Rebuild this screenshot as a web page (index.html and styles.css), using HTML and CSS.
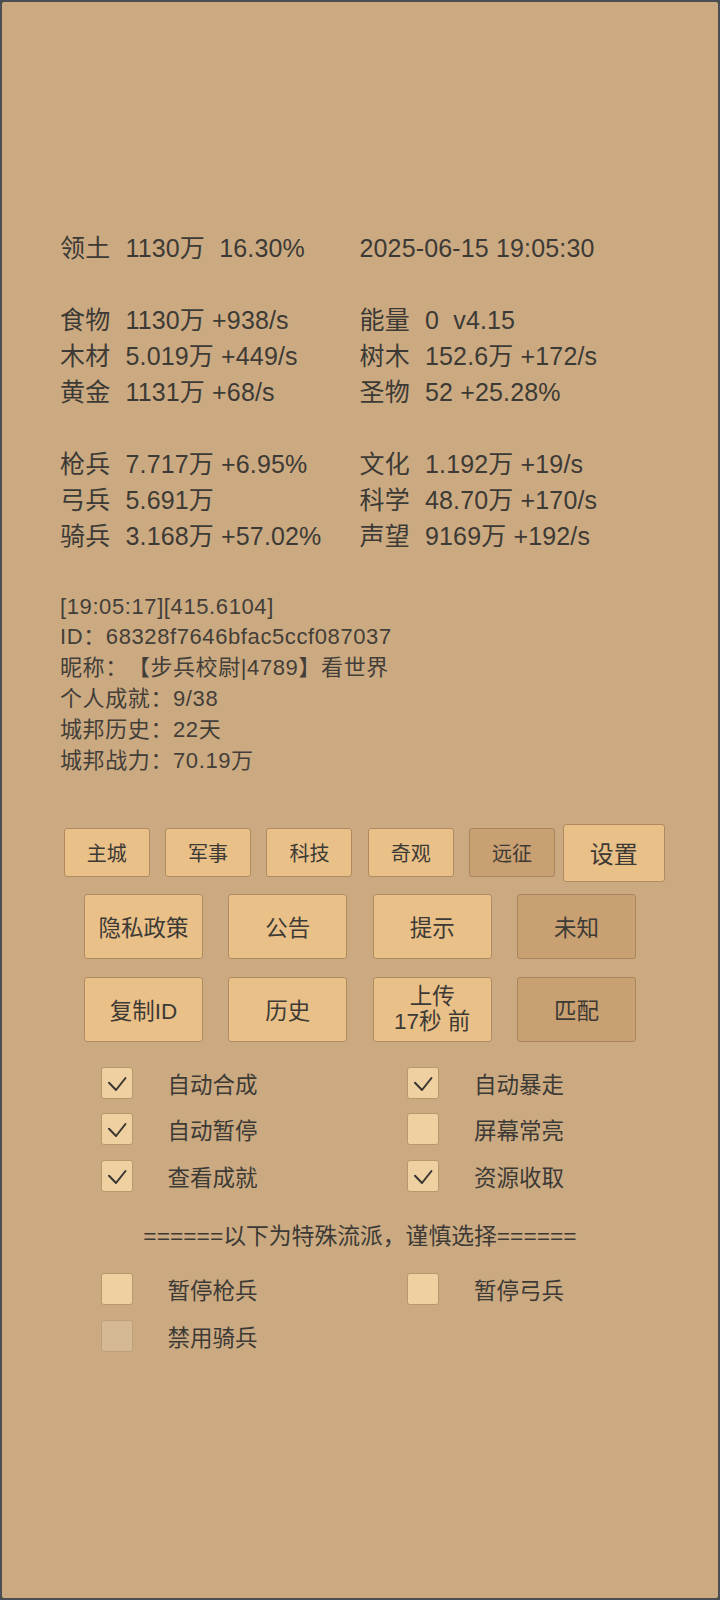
FILE: index.html
```html
<!DOCTYPE html>
<html lang="zh-CN">
<head>
    <meta charset="UTF-8">
    <meta name="viewport" content="width=device-width, initial-scale=1.0">
    <title>城邦</title>
    <link rel="stylesheet" href="styles.css">
</head>
<body>
    <div class="frame">
        <div class="stats">
            <div class="stat"><span class="label">领土</span><span class="value">1130万  16.30%</span></div>
            <div class="stat"><span class="value">2025-06-15 19:05:30</span></div>
            <div class="stat"></div><div class="stat"></div>
            <div class="stat"><span class="label">食物</span><span class="value">1130万 +938/s</span></div>
            <div class="stat"><span class="label">能量</span><span class="value">0  v4.15</span></div>
            <div class="stat"><span class="label">木材</span><span class="value">5.019万 +449/s</span></div>
            <div class="stat"><span class="label">树木</span><span class="value">152.6万 +172/s</span></div>
            <div class="stat"><span class="label">黄金</span><span class="value">1131万 +68/s</span></div>
            <div class="stat"><span class="label">圣物</span><span class="value">52 +25.28%</span></div>
            <div class="stat"></div><div class="stat"></div>
            <div class="stat"><span class="label">枪兵</span><span class="value">7.717万 +6.95%</span></div>
            <div class="stat"><span class="label">文化</span><span class="value">1.192万 +19/s</span></div>
            <div class="stat"><span class="label">弓兵</span><span class="value">5.691万</span></div>
            <div class="stat"><span class="label">科学</span><span class="value">48.70万 +170/s</span></div>
            <div class="stat"><span class="label">骑兵</span><span class="value">3.168万 +57.02%</span></div>
            <div class="stat"><span class="label">声望</span><span class="value">9169万 +192/s</span></div>
        </div>

        <div class="info">
            <p>[19:05:17][415.6104]</p>
            <p>ID：68328f7646bfac5ccf087037</p>
            <p>昵称：【步兵校尉|4789】看世界</p>
            <p>个人成就：9/38</p>
            <p>城邦历史：22天</p>
            <p>城邦战力：70.19万</p>
        </div>

        <div class="tabs">
            <button class="tab">主城</button>
            <button class="tab">军事</button>
            <button class="tab">科技</button>
            <button class="tab">奇观</button>
            <button class="tab dim">远征</button>
            <button class="tab big">设置</button>
        </div>

        <div class="actions">
            <button class="btn">隐私政策</button>
            <button class="btn">公告</button>
            <button class="btn">提示</button>
            <button class="btn dim">未知</button>
        </div>
        <div class="actions second">
            <button class="btn">复制ID</button>
            <button class="btn">历史</button>
            <button class="btn two-line">上传<br>17秒 前</button>
            <button class="btn dim">匹配</button>
        </div>

        <div class="options">
            <label class="opt"><span class="box"><svg viewBox="0 0 30 30"><polyline points="7,14.7 14,22 23.5,10"/></svg></span>自动合成</label>
            <label class="opt"><span class="box"><svg viewBox="0 0 30 30"><polyline points="7,14.7 14,22 23.5,10"/></svg></span>自动暴走</label>
            <label class="opt"><span class="box"><svg viewBox="0 0 30 30"><polyline points="7,14.7 14,22 23.5,10"/></svg></span>自动暂停</label>
            <label class="opt"><span class="box"></span>屏幕常亮</label>
            <label class="opt"><span class="box"><svg viewBox="0 0 30 30"><polyline points="7,14.7 14,22 23.5,10"/></svg></span>查看成就</label>
            <label class="opt"><span class="box"><svg viewBox="0 0 30 30"><polyline points="7,14.7 14,22 23.5,10"/></svg></span>资源收取</label>
        </div>

        <p class="divider">======以下为特殊流派，谨慎选择======</p>

        <div class="options special">
            <label class="opt"><span class="box"></span>暂停枪兵</label>
            <label class="opt"><span class="box"></span>暂停弓兵</label>
            <label class="opt"><span class="box disabled"></span>禁用骑兵</label>
        </div>
    </div>
</body>
</html>
```

FILE: styles.css
```css
:root {
    --bg: #cbaa82;
    --text: #3d3a35;
    --btn: #e9c088;
    --btn-border: #b08b62;
    --btn-dim: #c9a071;
    --btn-dim-border: #a8845e;
}

* { box-sizing: border-box; }
body { margin: 0; background: #4b4e53; font-family: "Liberation Sans", "Noto Sans CJK SC", sans-serif; color: var(--text); text-spacing-trim: space-all; }
.frame { width: 720px; height: 1600px; border: 2px solid #4b4e53; border-radius: 4px; background: var(--bg); padding-top: 228px; overflow: hidden; }

/* resource table */
.stats { display: grid; grid-template-columns: 299.5px 1fr; grid-auto-rows: 36px; padding-left: 58px; font-size: 25px; letter-spacing: 0.15px; line-height: 36px; }
.stat { display: flex; white-space: pre; }
.stat .label { width: 65.5px; flex-shrink: 0; }

/* player info */
.info { margin-top: 37.6px; padding-left: 58px; font-size: 22px; letter-spacing: 0.6px; line-height: 30.8px; color: #433e38; }
.info p { margin: 0; white-space: pre; }

/* buttons */
button { font-family: inherit; color: var(--text); background: var(--btn); border: 1px solid var(--btn-border); border-radius: 3px; padding: 0; cursor: pointer; }
button.dim { background: var(--btn-dim); border-color: var(--btn-dim-border); }
.tabs { display: flex; align-items: center; gap: 15.3px; height: 58px; margin-top: 47.6px; padding-left: 61.8px; }
.tab { width: 86px; height: 49px; font-size: 20px; }
.tab.big { width: 101.7px; height: 58px; font-size: 24px; margin-left: -7.4px; }
.actions { display: flex; justify-content: center; gap: 25.3px; margin-top: 12px; }
.actions.second { margin-top: 18.3px; }
.btn { width: 119px; height: 65px; font-size: 22.5px; }
.actions.second .btn { height: 64.4px; }
.btn.two-line { line-height: 1.15; }

/* toggles */
.options { display: grid; grid-template-columns: 306.6px 1fr; grid-auto-rows: 46.7px; margin-top: 17.8px; padding-left: 98.7px; font-size: 22.5px; }
.options.special { margin-top: 14.6px; }
.opt { display: flex; align-items: center; gap: 34.8px; }
.box { width: 32px; height: 32px; flex-shrink: 0; background: #efd1a1; border: 1px solid #b9976c; border-radius: 3px; }
.box svg { display: block; width: 30px; height: 30px; fill: none; stroke: #3a3631; stroke-width: 2; stroke-linecap: round; stroke-linejoin: round; }
.box.disabled { background: #d4b994; border-color: #bf9f78; }
.divider { margin: 21.6px 0 0; text-align: center; font-size: 22.8px; line-height: 30px; }
```
